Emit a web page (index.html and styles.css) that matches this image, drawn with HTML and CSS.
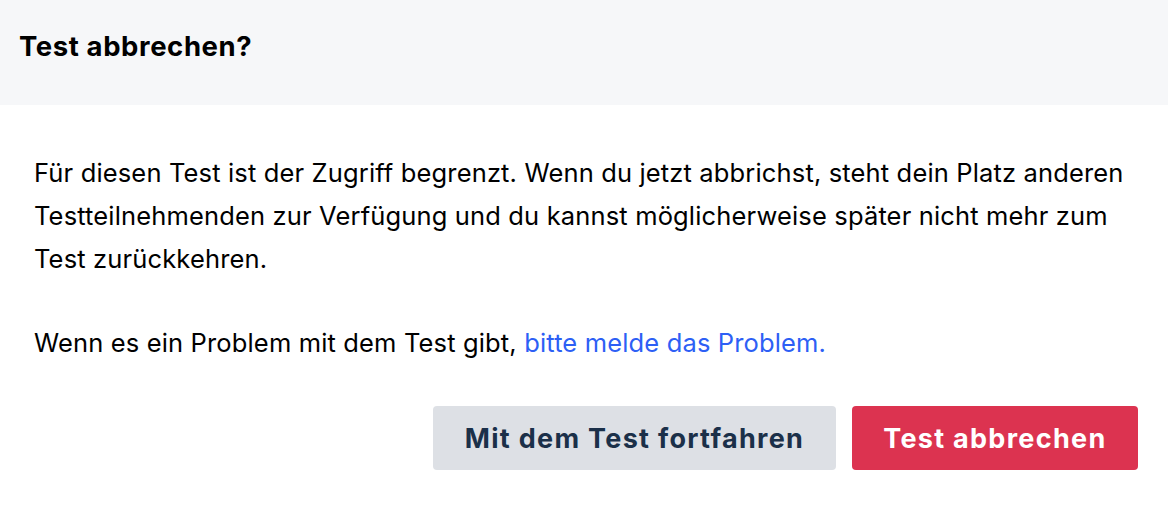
FILE: index.html
```html
<!DOCTYPE html>
<html lang="de">
<head>
<meta charset="utf-8">
<title>Test abbrechen?</title>
<link rel="stylesheet" href="styles.css">
</head>
<body>
<div class="dialog">
  <header class="dialog-header">
    <h1 class="dialog-title">Test abbrechen?</h1>
  </header>
  <div class="dialog-body">
    <p class="text">Für diesen Test ist der Zugriff begrenzt. Wenn du jetzt abbrichst, steht dein Platz anderen Testteilnehmenden zur Verfügung und du kannst möglicherweise später nicht mehr zum Test zurückkehren.</p>
    <p class="text">Wenn es ein Problem mit dem Test gibt, <a class="link" href="#">bitte melde das Problem.</a></p>
    <div class="actions">
      <button class="btn btn-secondary">Mit dem Test fortfahren</button>
      <button class="btn btn-danger">Test abbrechen</button>
    </div>
  </div>
</div>
</body>
</html>
```
FILE: styles.css
```css
html, body {
  margin: 0;
  padding: 0;
  background: #ffffff;
}
body {
  font-family: Inter, "Liberation Sans", sans-serif;
  color: #000000;
}
.dialog {
  width: 1168px;
}
.dialog-header {
  background: #f6f7f9;
  height: 105px;
  box-sizing: border-box;
  padding: 33px 19px 0;
}
.dialog-title {
  margin: 0;
  font-size: 27.5px;
  font-weight: 700;
  line-height: 26px;
  letter-spacing: 0.6px;
}
.dialog-body {
  padding: 45.5px 30px 0 34px;
}
.text {
  margin: 0 0 41px 0;
  font-size: 25.5px;
  line-height: 43px;
  letter-spacing: 0.15px;
}
.text + .text {
  margin-bottom: 42.5px;
}
.link {
  color: #2d5ff5;
  text-decoration: none;
}
.actions {
  display: flex;
  justify-content: flex-end;
  gap: 16px;
}
.btn {
  height: 64px;
  border: none;
  border-radius: 4px;
  padding: 0 31.5px;
  font-family: inherit;
  font-size: 27px;
  font-weight: 700;
  letter-spacing: 1.3px;
  cursor: pointer;
}
.btn-secondary {
  background: #dde0e5;
  color: #1b3049;
}
.btn-danger {
  background: #dc3350;
  color: #ffffff;
}
```
